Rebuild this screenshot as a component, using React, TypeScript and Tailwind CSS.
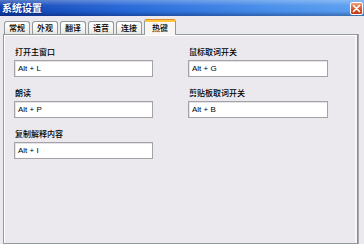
import React from "react";

const tabs = ["常规", "外观", "翻译", "语音", "连接", "热键"];
const active = "热键";

const fields = [
  { label: "打开主窗口", value: "Alt + L" },
  { label: "鼠标取词开关", value: "Alt + G" },
  { label: "朗读", value: "Alt + P" },
  { label: "剪贴板取词开关", value: "Alt + B" },
  { label: "复制解释内容", value: "Alt + I" },
];

const Field = ({ label, value }: { label: string; value: string }) => (
  <div className="flex flex-col">
    <div className="h-[12px] leading-[12px] text-[8px] font-medium text-black pl-[1px]">{label}</div>
    <div className="mt-[2px] h-[17px] border border-[#a3a2a7] bg-white flex items-center pl-[3px] shadow-[inset_1px_1px_0_#e4e3e6]">
      <span className="text-[8px] leading-none text-black font-['Liberation_Sans',sans-serif]">{value}</span>
    </div>
  </div>
);

export default function App() {
  return (
    <div className="w-[364px] h-[244px] overflow-hidden bg-[#ebe9ed] flex flex-col font-['Noto_Sans_CJK_SC',sans-serif]">
      {/* title bar */}
      <div className="h-[16px] shrink-0 flex items-center justify-between pl-[2px] pr-[1px] bg-[linear-gradient(180deg,rgba(255,255,255,0.3)_0%,rgba(255,255,255,0.05)_35%,rgba(0,0,0,0)_70%,rgba(0,0,30,0.3)_100%),linear-gradient(90deg,#0d3fae_0%,#2466d8_35%,#468eea_75%,#5a9ef0_100%)]">
        <span className="text-[10px] leading-none font-bold text-white [text-shadow:1px_1px_0_#0a2a80]">系统设置</span>
        <div className="w-[13px] h-[13px] rounded-[2px] border border-white bg-[linear-gradient(180deg,#f0a080_0%,#d9552c_55%,#c23c18_100%)] flex items-center justify-center">
          <svg width="9" height="9" viewBox="0 0 9 9">
            <path d="M1.5 1.5 L7.5 7.5 M7.5 1.5 L1.5 7.5" stroke="white" strokeWidth="1.6" strokeLinecap="round" />
          </svg>
        </div>
      </div>

      {/* tabs */}
      <div className="mt-[3px] h-[16px] shrink-0 flex items-start gap-[2px] pl-[4px] relative z-10">
        {tabs.map((t) =>
          t === active ? (
            <div
              key={t}
              className="h-[16px] w-[32px] border-x border-[#919b9c] rounded-t-[3px] bg-[#f7f6f4] flex flex-col"
            >
              <div className="h-[1px] bg-[#e68b2c] rounded-t-[3px]" />
              <div className="h-[2px] bg-[#ffc73c]" />
              <div className="flex-1 flex items-start justify-center pt-[1px] text-[8px] leading-[10px] font-medium text-black">{t}</div>
            </div>
          ) : (
            <div
              key={t}
              className="mt-[2px] h-[13px] w-[26px] border border-b-0 border-[#919b9c] rounded-t-[3px] bg-[linear-gradient(180deg,#ffffff_0%,#f4f3f0_60%,#e6e4df_100%)] flex items-center justify-center text-[8px] leading-none font-medium text-black"
            >
              {t}
            </div>
          )
        )}
      </div>

      {/* panel */}
      <div className="-mt-[1px] ml-[3px] mr-[6px] flex-1 border border-[#919b9c] border-r-[#8a8a90] bg-[#ebe9ed] shadow-[inset_1px_1px_0_#ffffff,inset_-2px_0_0_#f6f5f7,1px_0_0_#a9a8ad]">
        <div className="pt-[11px] pl-[10px] grid grid-cols-[139px_140px] gap-x-[35px] gap-y-[10px]">
          {fields.map((f) => (
            <Field key={f.label} label={f.label} value={f.value} />
          ))}
        </div>
      </div>
    </div>
  );
}
